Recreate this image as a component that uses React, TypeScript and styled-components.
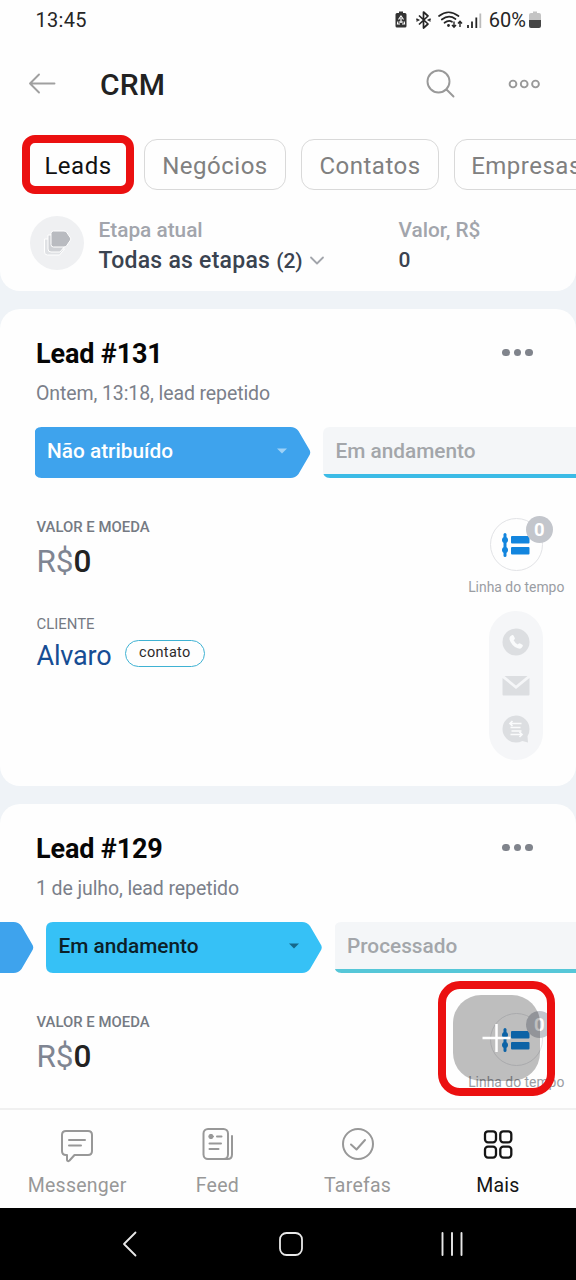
import React from "react";
import styled, { createGlobalStyle } from "styled-components";

const GlobalStyle = createGlobalStyle`
  * { box-sizing: border-box; }
  html, body { margin: 0; padding: 0; background: #eff3f7; }
  body { font-family: Roboto, "Liberation Sans", sans-serif; }
  svg { display: block; flex: none; overflow: visible; }
`;

const RED = "#eb1010";

const Screen = styled.div`
  width: 576px;
  height: 1280px;
  display: flex;
  flex-direction: column;
  overflow: hidden;
  background: #eff3f7;
`;

const TopPanel = styled.header`
  height: 291px;
  flex: none;
  background: #fefefe;
  border-radius: 0 0 20px 20px;
`;

const StatusBar = styled.div`
  height: 40px;
  padding: 0 35px 0 35.5px;
  display: flex;
  justify-content: space-between;
  align-items: center;
  color: #262626;
  font-size: 20px;
  line-height: 40px;
`;

const Clock = styled.span`
  letter-spacing: 0.3px;
`;

const StatusIcons = styled.div`
  display: flex;
  align-items: center;
`;

const Percent = styled.span`
  margin: 0 3px 0 8px;
  letter-spacing: 0;
`;

const TitleBar = styled.div`
  height: 95px;
  padding: 0 36px 7px 29px;
  display: flex;
  align-items: center;
`;

const PageTitle = styled.h1`
  margin: 0;
  padding: 1px 0 0 42px;
  flex: 1;
  font-size: 30px;
  line-height: 40px;
  font-weight: 500;
  letter-spacing: 0.1px;
  color: #222;
`;

const TitleActions = styled.div`
  display: flex;
  align-items: center;
  gap: 53px;
`;

const Tabs = styled.nav`
  height: 59px;
  padding-left: 22px;
  display: flex;
  align-items: center;
  overflow: hidden;
`;

const Tab = styled.div<{ $width: number; $gap?: number; $active?: boolean }>`
  width: ${(p) => p.$width}px;
  height: ${(p) => (p.$active ? 59 : 51)}px;
  margin-left: ${(p) => p.$gap ?? 0}px;
  flex: none;
  display: flex;
  align-items: center;
  justify-content: center;
  border: ${(p) => (p.$active ? `8px solid ${RED}` : "1.5px solid #d9d9d9")};
  border-radius: 13px;
  color: ${(p) => (p.$active ? "#111" : "#808080")};
  font-size: 24px;
  letter-spacing: 0.5px;
  padding-top: 2px;
`;

const Summary = styled.section`
  padding: 21px 0 0 30px;
  display: flex;
`;

const SummaryIcon = styled.div`
  width: 54px;
  height: 54px;
  margin-top: 1px;
  display: flex;
  align-items: center;
  justify-content: center;
  border-radius: 50%;
  background: #eff0f2;
`;

const SummaryField = styled.div<{ $width: number }>`
  width: ${(p) => p.$width}px;
  padding-left: 14.5px;
`;

const SummaryLabel = styled.div`
  height: 30px;
  line-height: 30px;
  font-size: 20.8px;
  font-weight: 500;
  color: #a2a5ac;
`;

const SummaryValue = styled.div`
  height: 30px;
  display: flex;
  align-items: center;
  gap: 6px;
  white-space: nowrap;
  font-size: 23px;
  letter-spacing: 0.25px;
  font-weight: 500;
  color: #3a4350;
`;

const Count = styled.span`
  font-size: 21px;
  letter-spacing: 0;
`;

const Feed = styled.main`
  height: 817px;
  padding-top: 18px;
  flex: none;
  overflow: hidden;
  position: relative;
`;

const Card = styled.article<{ $height: number }>`
  height: ${(p) => p.$height}px;
  margin-bottom: 18.5px;
  padding-top: 30px;
  border-radius: 20px;
  background: #fefefe;
  overflow: hidden;
`;

const CardHead = styled.div`
  padding: 0 43.5px 0 36px;
  display: flex;
  justify-content: space-between;
`;

const CardTitle = styled.h2`
  margin: 0;
  height: 30px;
  line-height: 30px;
  font-size: 27px;
  font-weight: 700;
  letter-spacing: -0.15px;
  color: #060606;
`;

const Dots = styled.div`
  padding-top: 9.5px;
  display: flex;
  gap: 4px;
`;

const Dot = styled.i`
  width: 7.5px;
  height: 7.5px;
  border-radius: 50%;
  background: #80848c;
`;

const Subtitle = styled.div`
  margin: 13px 0 0 36px;
  height: 24px;
  line-height: 24px;
  font-size: 19.5px;
  letter-spacing: -0.1px;
  color: #7b808a;
`;

const Stages = styled.div<{ $offset: number }>`
  margin: 21px 0 0 ${(p) => p.$offset}px;
  display: flex;
  gap: 12.5px;
`;

const Stage = styled.div<{ $fill: string; $ink: string; $line?: string }>`
  width: 276px;
  height: 51px;
  flex: none;
  padding: 0 23.5px ${(p) => (p.$line ? 0 : 3)}px 12.5px;
  display: flex;
  align-items: center;
  justify-content: space-between;
  clip-path: path("M7 0H256Q261 0 264 4L274.5 22Q277 25.500 274.500 29L264 47Q261 51 256 51H7Q0 51 0 44V7Q0 0 7 0Z");
  background: ${(p) => p.$fill};
  border-bottom: ${(p) => (p.$line ? `4px solid ${p.$line}` : "none")};
  font-size: 20.8px;
  font-weight: 500;
  color: ${(p) => p.$ink};
`;

const CardBody = styled.div`
  padding-left: 36.5px;
  display: flex;
  justify-content: space-between;
`;

const Fields = styled.div`
  padding-top: 40px;
`;

const Caption = styled.div<{ $weight: number }>`
  height: 18px;
  line-height: 18px;
  font-size: 14.9px;
  font-weight: ${(p) => p.$weight};
  color: #757a83;
`;

const Money = styled.div`
  height: 36px;
  margin: 8px 0 34.5px;
  line-height: 36px;
  font-size: 31.5px;
  letter-spacing: -0.1px;
  color: #7f8592;
`;

const Amount = styled.span`
  color: #222;
  font-weight: 500;
`;

const Client = styled.div`
  margin-top: 5px;
  height: 36px;
  display: flex;
  align-items: center;
  gap: 13.5px;
  font-size: 27px;
  letter-spacing: -0.2px;
  color: #164d94;
`;

const ContactTag = styled.span`
  width: 80px;
  height: 27px;
  margin-bottom: 5px;
  display: flex;
  align-items: center;
  justify-content: center;
  border: 1.8px solid #3fb2d3;
  border-radius: 14px;
  font-size: 14.5px;
  padding-bottom: 1px;
  letter-spacing: 0.3px;
  color: #2b2b2b;
`;

const Side = styled.aside`
  width: 119.5px;
  padding-top: 40px;
  display: flex;
  flex-direction: column;
  align-items: center;
`;

const TimelineCircle = styled.div`
  position: relative;
  width: 53px;
  height: 53px;
  display: flex;
  align-items: center;
  justify-content: center;
  border: 1.5px solid #e2e3e6;
  border-radius: 50%;
`;

const Badge = styled.span`
  position: absolute;
  top: -3px;
  right: -11px;
  width: 27px;
  height: 27px;
  line-height: 28px;
  text-align: center;
  border-radius: 50%;
  background: #c3c6cc;
  color: #fff;
  font-size: 18.5px;
  font-weight: 700;
`;

const TimelineLabel = styled.div`
  height: 20px;
  margin-top: 5.5px;
  line-height: 20px;
  font-size: 13.9px;
  white-space: nowrap;
  color: #9a9da3;
`;

const Channels = styled.div`
  width: 54px;
  height: 149px;
  margin-top: 14.5px;
  padding: 17px 0;
  display: flex;
  flex-direction: column;
  align-items: center;
  justify-content: space-between;
  border-radius: 27px;
  background: #f5f6f8;
`;

const AddFrame = styled.div`
  position: absolute;
  left: 438px;
  top: 690px;
  width: 117px;
  height: 115px;
  padding: 6px 0 0 7px;
  border: 8px solid ${RED};
  border-radius: 22px;
`;

const AddButton = styled.div`
  width: 87px;
  height: 86px;
  display: flex;
  align-items: center;
  justify-content: center;
  border-radius: 28px;
  background: rgba(0, 0, 0, 0.25);
`;

const BottomNav = styled.nav`
  height: 100px;
  flex: none;
  padding: 0 8px 0 7px;
  display: flex;
  border-top: 2px solid #f0f0f0;
  background: #fefefe;
`;

const NavItem = styled.div<{ $active?: boolean }>`
  flex: 1;
  padding-top: 16px;
  display: flex;
  flex-direction: column;
  align-items: center;
  color: ${(p) => (p.$active ? "#151515" : "#989898")};
`;

const NavLabel = styled.span`
  margin-top: 9px;
  height: 30px;
  line-height: 30px;
  font-size: 19.5px;
  letter-spacing: 0.25px;
`;

const SystemNav = styled.div`
  height: 72px;
  flex: none;
  padding: 0 112px 0 122px;
  display: flex;
  align-items: center;
  justify-content: space-between;
  background: #000;
`;

const Stroke = (props: React.SVGProps<SVGSVGElement>) => (
  <svg fill="none" stroke="currentColor" strokeLinecap="round" strokeLinejoin="round" {...props} />
);

const StatusGlyphs = () => (
  <svg width="87" height="20" viewBox="0 0 87 20" fill="none" stroke="#262626">
    <path d="M3 3h2V1.500h4V3h2q1.500 0 1.500 1.500V16q0 1.500-1.500 1.500H3Q1.500 17.500 1.500 16V4.500Q1.500 3 3 3Z" fill="#333" stroke="none" />
    <path d="M4.500 9.500 7 6l2.500 3.500M3.800 11.500 3.500 14H6M10.200 11.500l.3 2.500H8M7 8v5M5 12h4" stroke="#fff" strokeWidth="1.200" />
    <path d="M25 5.500 34 14l-4.500 4V2L34 6l-9 8.500" strokeWidth="1.700" strokeLinejoin="round" />
    <path d="M22.300 8.800 24.500 10l-2.200 1.200M36.700 8.800 34.500 10l2.200 1.200" strokeWidth="1.500" />
    <path d="M45 6q9.500-7.500 19.500 0M47.800 9.500q7-5.300 13.700-.5M50.500 12.800q4.200-3.100 7.500-1" strokeWidth="1.700" strokeLinecap="round" />
    <circle cx="54.500" cy="15.500" r="1.400" fill="#262626" stroke="none" />
    <path d="M60 11.500v5.500M58 15l2 2.300 2-2.300M66 17v-5.500M64 13.500l2-2.300 2 2.300" strokeWidth="1.400" />
    <path d="M74 15v3M78 11.500V18M82.300 7.500V18" strokeWidth="1.800" />
    <path d="M86.300 3.500V18" stroke="#bbb" strokeWidth="1.800" />
  </svg>
);

const BatteryGlyph = () => (
  <svg width="12" height="18" viewBox="0 0 12 18">
    <path d="M2 2h2V.500h4V2h2q2 0 2 2v5H0V4q0-2 2-2Z" fill="#c4c4c4" />
    <path d="M0 9h12v6q0 2-2 2H2q-2 0-2-2Z" fill="#454545" />
  </svg>
);

const BackArrow = () => (
  <Stroke width="29" height="22" viewBox="0 0 29 22" color="#a0a0a0" strokeWidth="1.900">
    <path d="M25.500 10.500H1M10 1.500l-9 9 9 9" />
  </Stroke>
);

const SearchGlyph = () => (
  <Stroke width="29" height="30" viewBox="0 0 29 30" color="#999" strokeWidth="1.900">
    <circle cx="12.500" cy="12.500" r="11" />
    <path d="m20.500 20.500 7 7" />
  </Stroke>
);

const MoreGlyph = () => (
  <Stroke width="32" height="10" viewBox="0 0 32 10" color="#999" strokeWidth="1.900">
    <circle cx="5" cy="5" r="3.400" />
    <circle cx="16.200" cy="5" r="3.400" />
    <circle cx="27.500" cy="5" r="3.400" />
  </Stroke>
);

const StackGlyph = () => (
  <svg width="30" height="26" viewBox="0 0 30 26" stroke="#fff" strokeWidth="1">
    <path d="M2.500 9v13q0 3 3 3h12l5-6H9V9Z" fill="#e0e2e5" />
    <path d="M6 5v14q0 3 3 3h9l5-6H11V5Z" fill="#cfd1d5" />
    <path d="M11.500 1H22q2 0 3 1.800l3.500 5.200q.7 1 0 2L25 15.200q-1 1.800-3 1.800H11.500Q9 17 9 14.500v-11Q9 1 11.500 1Z" fill="#b9bbc0" />
  </svg>
);

const ChevronDown = () => (
  <Stroke width="16" height="9" viewBox="0 0 16 9" color="#a2a5ab" strokeWidth="1.800">
    <path d="m2 1.500 6 6 6-6" />
  </Stroke>
);

const Caret = ({ color }: { color: string }) => (
  <svg width="10" height="6" viewBox="0 0 10 6">
    <path d="M0 .500h10L5 5.500Z" fill={color} />
  </svg>
);

const TimelineGlyph = () => (
  <svg width="29" height="24" viewBox="0 0 29 24" fill="#1285de">
    <rect x="1.500" y="0" width="3" height="24" rx="1.500" />
    <circle cx="3" cy="7" r="3" />
    <circle cx="3" cy="17" r="3" />
    <rect x="9" y="3" width="18.500" height="7.500" rx="1" />
    <rect x="9" y="14" width="18.500" height="7.500" rx="1" />
  </svg>
);

const PhoneGlyph = () => (
  <svg width="28" height="28" viewBox="0 0 28 28">
    <circle cx="14" cy="14" r="13.500" fill="#dcdee1" />
    <path d="M8.300 8.300 10.200 7q.8-.4 1.300.5l1.300 2.400q.3.700-.2 1.300l-1 1.100q1.300 2.600 4.100 4.200l1.200-1q.6-.5 1.200-.1l2.300 1.400q.8.600.3 1.400l-1.300 1.800q-1.100 1.300-3.600.3Q9.500 18 7.500 11.500q-.4-2 .8-3.200Z" fill="#fafbfc" />
  </svg>
);

const MailGlyph = () => (
  <svg width="28" height="20" viewBox="0 0 28 20" fill="#dcdee1">
    <path d="M2.500 0h23L14 9.500Z" />
    <path d="M.500 2 14 13 27.500 2V18.500q0 1-1 1H1.500q-1 0-1-1Z" />
  </svg>
);

const ChatGlyph = () => (
  <svg width="28" height="28" viewBox="0 0 28 28">
    <path d="M14 .500A13.500 13.500 0 1 0 14 27.500q3.500 0 6.300-1.500l5.700 1.500-.5-6.200Q27.500 18.500 27.500 14A13.500 13.500 0 0 0 14 .500Z" fill="#dcdee1" />
    <path d="M19.500 8.500H8M10.500 6 8 8.500 10.500 11M8.500 12.500h10M9.500 16h10M8.500 19.500H20M17.500 17l2.500 2.500-2.500 2.500" fill="none" stroke="#fafbfc" strokeWidth="1.700" />
  </svg>
);

const PlusGlyph = () => (
  <svg width="28" height="28" viewBox="0 0 28 28" fill="none" stroke="#fff" strokeWidth="2.500">
    <path d="M13.500 0v28M-.500 14h28" />
  </svg>
);

const MessengerGlyph = () => (
  <Stroke width="34" height="36" viewBox="0 0 34 36" strokeWidth="2">
    <path d="M6 5h22q4 0 4 4v16q0 4-4 4H14.500l-5 5.500q-2 1.500-2.500-.5V29H6q-4 0-4-4V9q0-4 4-4Z" />
    <path d="M9 14h16M9 19.500h12" />
  </Stroke>
);

const FeedGlyph = () => (
  <Stroke width="34" height="36" viewBox="0 0 34 36" strokeWidth="2">
    <rect x="3.500" y="3" width="24.500" height="30" rx="4.500" />
    <path d="M32 10v18.500q0 4.500-4.500 4.500H22" />
    <circle cx="11" cy="10.500" r="2.200" fill="currentColor" strokeWidth="1" />
    <path d="M17 10.500h4.500M9.500 17.500H21M9.500 23h9" />
  </Stroke>
);

const TasksGlyph = () => (
  <Stroke width="34" height="36" viewBox="0 0 34 36" strokeWidth="2">
    <circle cx="17" cy="18" r="15" />
    <path d="m10 18.500 5.500 5 8.500-9.500" />
  </Stroke>
);

const GridGlyph = () => (
  <Stroke width="34" height="36" viewBox="0 0 34 36" strokeWidth="2.300">
    <rect x="4" y="5.300" width="11" height="11" rx="3" />
    <rect x="19.300" y="5.300" width="11" height="11" rx="3" />
    <rect x="4" y="20.600" width="11" height="11" rx="3" />
    <rect x="19.300" y="20.600" width="11" height="11" rx="3" />
  </Stroke>
);

type StageInfo = { name: string; fill: string; ink: string; line?: string; caret?: string };

type Lead = {
  title: string;
  subtitle: string;
  offset: number;
  height: number;
  stages: StageInfo[];
  client?: string;
};

const leads: Lead[] = [
  {
    title: "Lead #131",
    subtitle: "Ontem, 13:18, lead repetido",
    offset: 34.5,
    height: 476.5,
    client: "Alvaro",
    stages: [
      { name: "Não atribuído", fill: "#3ea3ed", ink: "#fff", caret: "#9ed2f7" },
      { name: "Em andamento", fill: "#f4f6f8", ink: "#a3a6aa", line: "#3bbbe6" },
    ],
  },
  {
    title: "Lead #129",
    subtitle: "1 de julho, lead repetido",
    offset: -242.5,
    height: 500,
    stages: [
      { name: "", fill: "#3ea3ed", ink: "#fff" },
      { name: "Em andamento", fill: "#36c1f6", ink: "#0b2028", caret: "#16688a" },
      { name: "Processado", fill: "#f4f6f8", ink: "#a3a6aa", line: "#56c7d8" },
    ],
  },
];

const LeadCard = ({ lead }: { lead: Lead }) => (
  <Card $height={lead.height}>
    <CardHead>
      <CardTitle>{lead.title}</CardTitle>
      <Dots>
        <Dot />
        <Dot />
        <Dot />
      </Dots>
    </CardHead>
    <Subtitle>{lead.subtitle}</Subtitle>
    <Stages $offset={lead.offset}>
      {lead.stages.map((s, i) => (
        <Stage key={i} $fill={s.fill} $ink={s.ink} $line={s.line}>
          {s.name}
          {s.caret && <Caret color={s.caret} />}
        </Stage>
      ))}
    </Stages>
    <CardBody>
      <Fields>
        <Caption $weight={500}>VALOR E MOEDA</Caption>
        <Money>
          R$<Amount>0</Amount>
        </Money>
        {lead.client && (
          <>
            <Caption $weight={400}>CLIENTE</Caption>
            <Client>
              {lead.client}
              <ContactTag>contato</ContactTag>
            </Client>
          </>
        )}
      </Fields>
      <Side>
        <TimelineCircle>
          <TimelineGlyph />
          <Badge>0</Badge>
        </TimelineCircle>
        <TimelineLabel>Linha do tempo</TimelineLabel>
        {lead.client && (
          <Channels>
            <PhoneGlyph />
            <MailGlyph />
            <ChatGlyph />
          </Channels>
        )}
      </Side>
    </CardBody>
  </Card>
);

export default function App() {
  return (
    <Screen>
      <GlobalStyle />
      <TopPanel>
        <StatusBar>
          <Clock>13:45</Clock>
          <StatusIcons>
            <StatusGlyphs />
            <Percent>60%</Percent>
            <BatteryGlyph />
          </StatusIcons>
        </StatusBar>
        <TitleBar>
          <BackArrow />
          <PageTitle>CRM</PageTitle>
          <TitleActions>
            <SearchGlyph />
            <MoreGlyph />
          </TitleActions>
        </TitleBar>
        <Tabs>
          <Tab $width={112} $active>Leads</Tab>
          <Tab $width={142} $gap={10}>Negócios</Tab>
          <Tab $width={138} $gap={15}>Contatos</Tab>
          <Tab $width={146} $gap={14.5}>Empresas</Tab>
        </Tabs>
        <Summary>
          <SummaryIcon>
            <StackGlyph />
          </SummaryIcon>
          <SummaryField $width={300}>
            <SummaryLabel>Etapa atual</SummaryLabel>
            <SummaryValue>
              <span>
                Todas as etapas <Count>(2)</Count>
              </span>
              <ChevronDown />
            </SummaryValue>
          </SummaryField>
          <SummaryField $width={160}>
            <SummaryLabel>Valor, R$</SummaryLabel>
            <SummaryValue>
              <Count>0</Count>
            </SummaryValue>
          </SummaryField>
        </Summary>
      </TopPanel>
      <Feed>
        {leads.map((lead) => (
          <LeadCard key={lead.title} lead={lead} />
        ))}
        <AddFrame>
          <AddButton>
            <PlusGlyph />
          </AddButton>
        </AddFrame>
      </Feed>
      <BottomNav>
        <NavItem>
          <MessengerGlyph />
          <NavLabel>Messenger</NavLabel>
        </NavItem>
        <NavItem>
          <FeedGlyph />
          <NavLabel>Feed</NavLabel>
        </NavItem>
        <NavItem>
          <TasksGlyph />
          <NavLabel>Tarefas</NavLabel>
        </NavItem>
        <NavItem $active>
          <GridGlyph />
          <NavLabel>Mais</NavLabel>
        </NavItem>
      </BottomNav>
      <SystemNav>
        <Stroke width="19" height="26" viewBox="0 0 19 26" color="#e8e8e8" strokeWidth="1.800">
          <path d="M13.500 1.500 2 13l11.500 11.500" />
        </Stroke>
        <Stroke width="24" height="24" viewBox="0 0 24 24" color="#e8e8e8" strokeWidth="1.800">
          <rect x="1" y="1" width="22" height="22" rx="6.500" />
        </Stroke>
        <Stroke width="24" height="24" viewBox="0 0 24 24" color="#e8e8e8" strokeWidth="1.900">
          <path d="M2.500 1v22M12 1v22M21.500 1v22" />
        </Stroke>
      </SystemNav>
    </Screen>
  );
}
